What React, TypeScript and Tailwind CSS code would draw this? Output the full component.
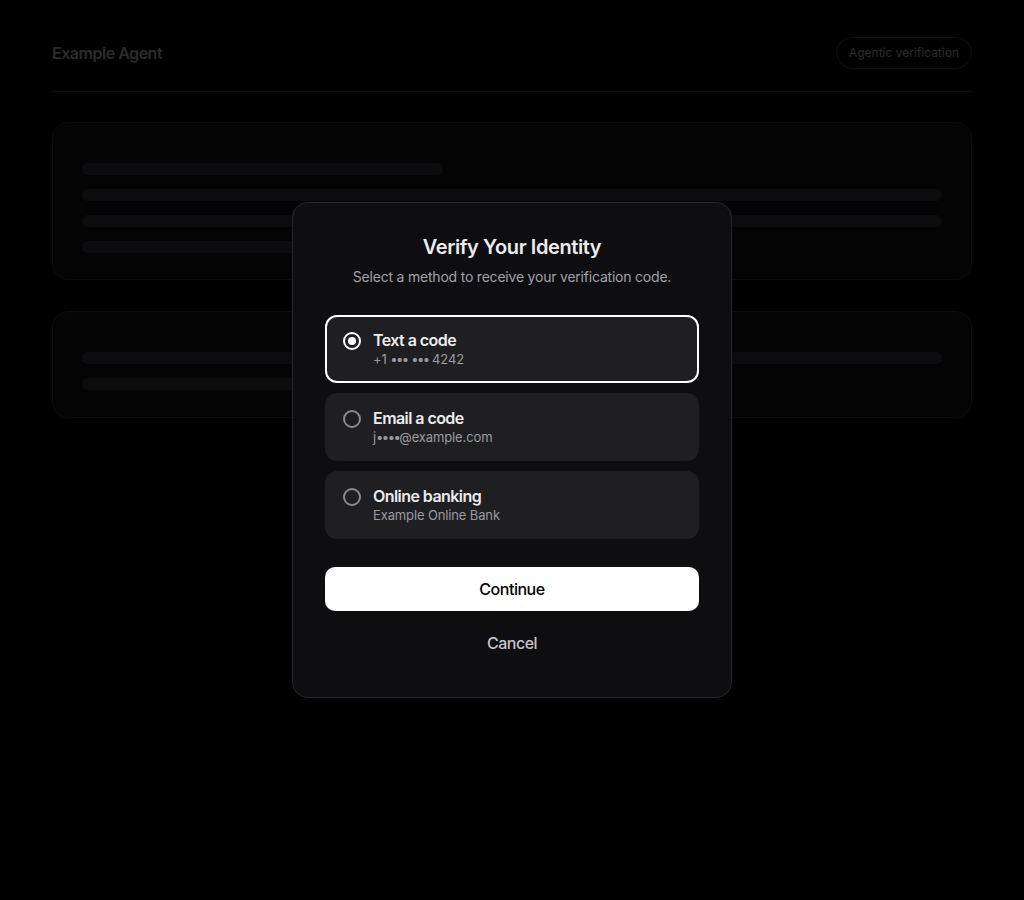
import { useState, type ReactNode } from "react";

type Method = {
  id: string;
  title: string;
  detail: ReactNode;
};

// masked characters, pulled a little tighter than the font's default bullet
const Dots = ({ n }: { n: number }) => (
  <span className="tracking-[-1.5px]">{"•".repeat(n)}</span>
);

const methods: Method[] = [
  {
    id: "sms",
    title: "Text a code",
    detail: (
      <>
        +1 <Dots n={3} /> <Dots n={3} /> 4242
      </>
    ),
  },
  {
    id: "email",
    title: "Email a code",
    detail: (
      <>
        j<Dots n={4} />@example.com
      </>
    ),
  },
  { id: "bank", title: "Online banking", detail: "Example Online Bank" },
];

function Radio({ checked }: { checked: boolean }) {
  return (
    <span
      className={
        checked
          ? "mt-[3px] flex h-[18px] w-[18px] shrink-0 items-center justify-center rounded-full border-2 border-white"
          : "mt-[3px] flex h-[18px] w-[18px] shrink-0 items-center justify-center rounded-full border-2 border-[#8a8a8f]"
      }
    >
      {checked && <span className="h-2 w-2 rounded-full bg-white" />}
    </span>
  );
}

export default function App() {
  const [selected, setSelected] = useState("sms");

  return (
    <div
      className="relative min-h-[900px] bg-black"
      style={{ fontFamily: "Inter, 'Noto Sans', sans-serif" }}
    >
      {/* page behind the dialog */}
      <div className="px-[52px] pt-[37px]">
        <header className="flex items-center justify-between border-b border-zinc-700 pb-[22px]">
          <h1 className="text-base font-semibold tracking-[-0.03em] text-zinc-300">Example Agent</h1>
          <span className="rounded-full border border-zinc-600 px-3 py-[7px] text-xs text-zinc-300">
            Agentic verification
          </span>
        </header>

        <section className="mt-[30px] flex flex-col gap-[14px] rounded-2xl border border-zinc-700 bg-zinc-900 px-[29px] pb-[26px] pt-10">
          <div className="h-3 w-[42%] rounded-full bg-zinc-700" />
          <div className="h-3 w-full rounded-full bg-zinc-700" />
          <div className="h-3 w-full rounded-full bg-zinc-700" />
          <div className="h-3 w-3/4 rounded-full bg-zinc-700" />
        </section>

        <section className="mt-[31px] flex flex-col gap-[14px] rounded-2xl border border-zinc-700 bg-zinc-900 px-[29px] pb-[27px] pt-10">
          <div className="h-3 w-full rounded-full bg-zinc-700" />
          <div className="h-3 w-2/3 rounded-full bg-zinc-700" />
        </section>
      </div>

      {/* overlay */}
      <div className="fixed inset-0 flex items-center justify-center bg-black/80">
        <div className="w-[440px] rounded-2xl border border-zinc-800 bg-[#0e0e10] px-8 pb-[34px] pt-[30px]">
          <h2 className="text-center text-xl font-semibold leading-7 tracking-[-0.02em] text-[#ececee]">
            Verify Your Identity
          </h2>
          <p className="mt-1.5 text-center text-sm tracking-[-0.015em] text-[#a1a1a8]">
            Select a method to receive your verification code.
          </p>

          <div className="mt-7 flex flex-col gap-2.5">
            {methods.map((m) => {
              const active = m.id === selected;
              return (
                <button
                  key={m.id}
                  onClick={() => setSelected(m.id)}
                  className={
                    active
                      ? "flex items-start gap-3 rounded-xl border-2 border-white bg-[#1f1f22] px-4 pb-[14px] pt-3 text-left"
                      : "flex items-start gap-3 rounded-xl border-2 border-transparent bg-[#1f1f22] px-4 pb-[14px] pt-3 text-left"
                  }
                >
                  <Radio checked={active} />
                  <span className="flex flex-col">
                    <span className="text-base font-semibold leading-[22px] tracking-[-0.035em] text-[#ececee]">
                      {m.title}
                    </span>
                    <span className="text-[13px] leading-4 tracking-[-0.01em] text-[#9a9aa0]">
                      {m.detail}
                    </span>
                  </span>
                </button>
              );
            })}
          </div>

          <button className="mt-7 h-11 w-full rounded-[10px] bg-white text-base font-medium tracking-[-0.03em] text-black">
            Continue
          </button>
          <button className="mt-3 h-10 w-full text-base font-medium tracking-[-0.03em] text-[#c4c4c8]">
            Cancel
          </button>
        </div>
      </div>
    </div>
  );
}
